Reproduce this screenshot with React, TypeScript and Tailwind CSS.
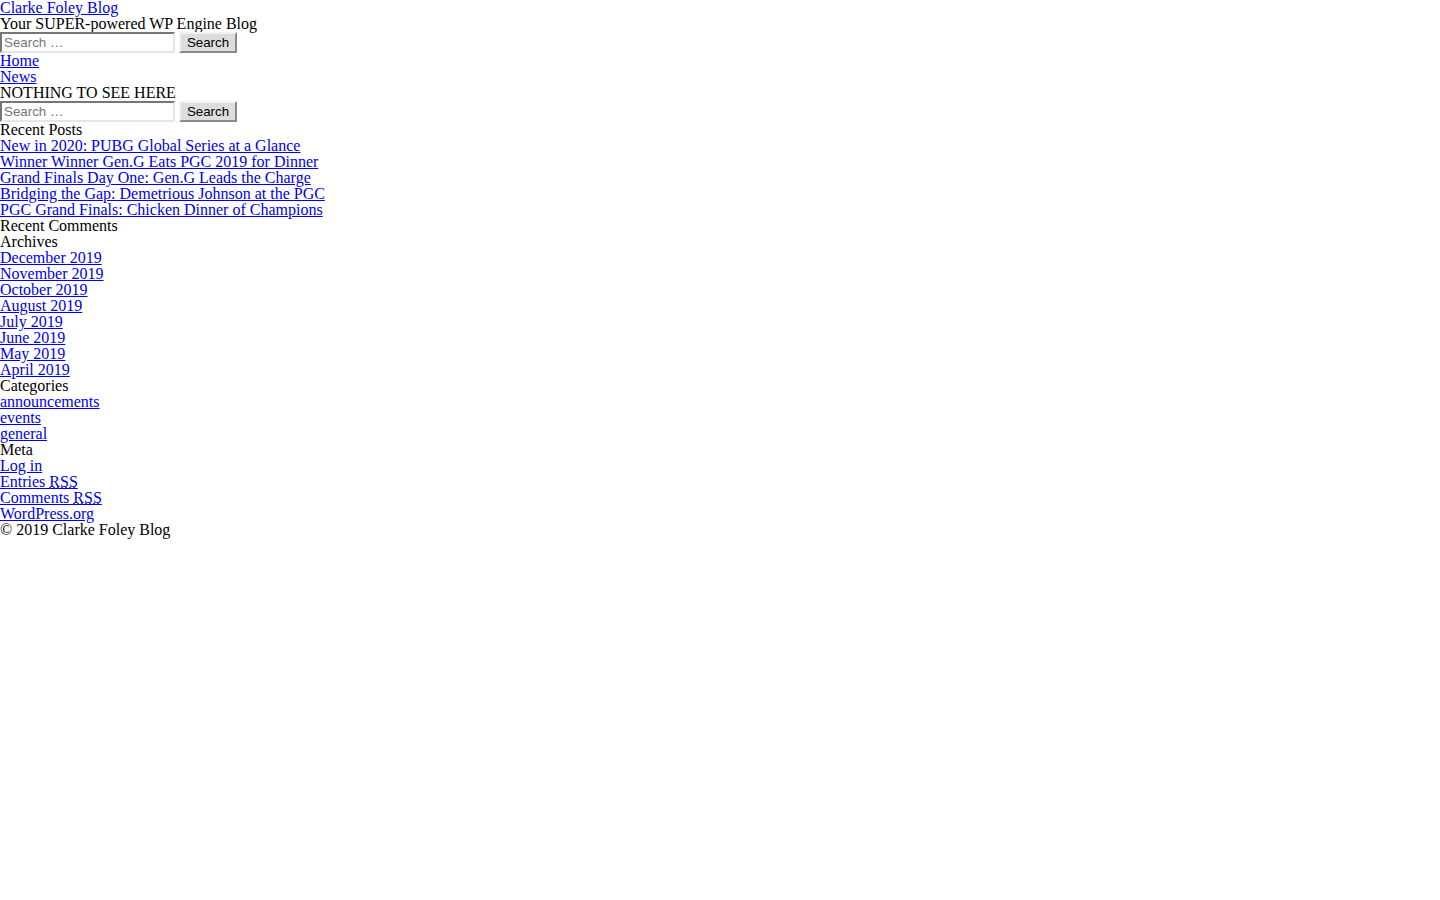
import React from 'react';

const recentPosts = [
  'New in 2020: PUBG Global Series at a Glance',
  'Winner Winner Gen.G Eats PGC 2019 for Dinner',
  'Grand Finals Day One: Gen.G Leads the Charge',
  'Bridging the Gap: Demetrious Johnson at the PGC',
  'PGC Grand Finals: Chicken Dinner of Champions'
];
const archives = ['December 2019', 'November 2019', 'October 2019', 'August 2019', 'July 2019', 'June 2019', 'May 2019', 'April 2019'];
const categories = ['announcements', 'events', 'general'];

const Link: React.FC<{ children: React.ReactNode }> = ({ children }) => <div>
    <a href="#" className="text-[#0000ee] underline">{children}</a>
  </div>;

const SearchForm: React.FC = () => <form className="flex items-center gap-[4px] h-[21px]" onSubmit={e => e.preventDefault()}>
    <label className="flex">
      <input type="search" placeholder="Search …" className="w-[175px] h-[21px] px-[2px] border-2 border-solid border-t-[#767676] border-l-[#767676] border-b-[#e6e6e6] border-r-[#e6e6e6] bg-white text-[13.33px] leading-[15px] text-black placeholder:text-[#757575] outline-none" style={{ fontFamily: '"Liberation Sans", Arial, sans-serif' }} />
    </label>
    <button type="submit" className="h-[21px] w-[58px] border-2 border-solid border-t-[#f3f3f3] border-l-[#f3f3f3] border-b-[#8a8a8a] border-r-[#8a8a8a] bg-[#dddddd] text-[13.33px] leading-[15px] text-black" style={{ fontFamily: '"Liberation Sans", Arial, sans-serif' }}>
      Search
    </button>
  </form>;

export default function App() {
  return <div className="min-h-screen bg-white text-black text-[16px] leading-4" style={{ fontFamily: '"Liberation Serif", "Times New Roman", serif' }}>
      <header>
        <Link>Clarke Foley Blog</Link>
        <div>Your SUPER-powered WP Engine Blog</div>
        <SearchForm />
        <nav>
          <Link>Home</Link>
          <Link>News</Link>
        </nav>
      </header>
      <main>
        <div>NOTHING TO SEE HERE</div>
      </main>
      <aside>
        <SearchForm />
        <div>Recent Posts</div>
        {recentPosts.map(p => <Link key={p}>{p}</Link>)}
        <div>Recent Comments</div>
        <div>Archives</div>
        {archives.map(a => <Link key={a}>{a}</Link>)}
        <div>Categories</div>
        {categories.map(c => <Link key={c}>{c}</Link>)}
        <div>Meta</div>
        <Link>Log in</Link>
        <Link>Entries <abbr className="underline decoration-dotted">RSS</abbr></Link>
        <Link>Comments <abbr className="underline decoration-dotted">RSS</abbr></Link>
        <Link>WordPress.org</Link>
      </aside>
      <footer>
        <div>© 2019 Clarke Foley Blog</div>
      </footer>
    </div>;
}
